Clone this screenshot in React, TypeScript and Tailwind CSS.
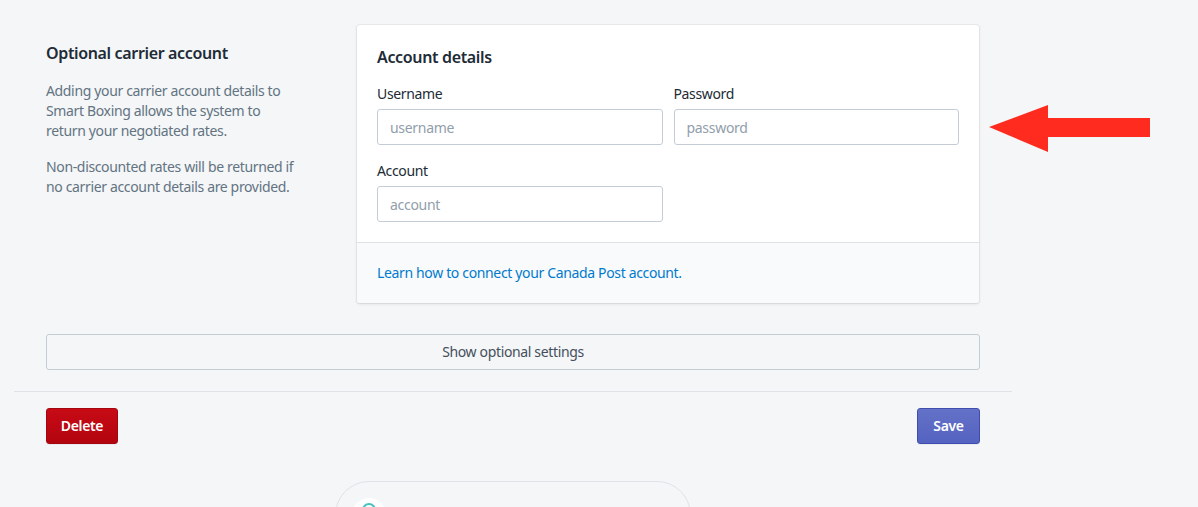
import React from 'react'

function Field({ label, placeholder }: { label: string; placeholder: string }) {
  return (
    <div className="flex-1 min-w-0">
      <label className="block text-[14px] leading-5 text-[#212b36] mb-[5px]">{label}</label>
      <input
        placeholder={placeholder}
        className="block w-full h-9 px-3 text-[14px] tracking-[-0.3px] bg-white border border-[#c4cdd5] rounded-[3px] outline-none placeholder:text-[#919eab]"
      />
    </div>
  )
}

export default function App() {
  return (
    <div className="relative min-h-screen bg-[#f4f6f8] text-[#212b36] text-[14px] leading-5 tracking-[-0.35px] font-['Segoe_UI','Noto_Sans',sans-serif] overflow-hidden">
      <div className="ml-[14px] w-[998px] pt-[25px]">
        {/* Annotated section */}
        <div className="flex px-8">
          <div className="w-[311px] pt-4 pr-[59px]">
            <h2 className="text-[16px] leading-6 font-semibold text-[#212b36]">Optional carrier account</h2>
            <p className="mt-4 text-[#637381]">
              Adding your carrier account details to Smart Boxing allows the system to return your negotiated rates.
            </p>
            <p className="mt-4 text-[#637381]">
              Non-discounted rates will be returned if no carrier account details are provided.
            </p>
          </div>

          <div className="w-[622px] bg-white rounded-[3px] shadow-[0_0_0_1px_rgba(63,63,68,0.05),0_1px_3px_0_rgba(63,63,68,0.15)] overflow-hidden">
            <div className="p-5">
              <h3 className="text-[16px] leading-6 font-semibold">Account details</h3>
              <div className="mt-[15px] flex gap-[11px]">
                <Field label="Username" placeholder="username" />
                <Field label="Password" placeholder="password" />
              </div>
              <div className="mt-4 flex gap-[11px]">
                <Field label="Account" placeholder="account" />
                <div className="flex-1" />
              </div>
            </div>
            <div className="border-t border-[#dfe3e8] bg-[#f9fafb] p-5">
              <a className="block text-[#007ace] cursor-pointer">
                Learn how to connect your Canada Post account.
              </a>
            </div>
          </div>
        </div>

        {/* Optional settings toggle */}
        <div className="px-8 mt-[31px]">
          <button className="w-full h-9 border border-[#c4cdd5] rounded-[3px] bg-[#f4f6f8] text-[#454f5b]">
            Show optional settings
          </button>
        </div>

        <div className="mt-[21px] border-t border-[#dfe3e8]" />

        {/* Actions */}
        <div className="px-8 pt-4 flex justify-between">
          <button className="h-9 w-[72px] rounded-[3px] border border-[#a30610] bg-gradient-to-b from-[#c70b15] to-[#b3050f] text-white font-semibold shadow-[0_1px_0_rgba(22,29,37,0.05)]">
            Delete
          </button>
          <button className="h-9 w-[63px] rounded-[3px] border border-[#3f4eae] bg-gradient-to-b from-[#6371c7] to-[#5563c1] text-white font-semibold shadow-[0_1px_0_rgba(22,29,37,0.05)]">
            Save
          </button>
        </div>

        {/* Footer help (cut off) */}
        <div className="mt-[37px] ml-[321px] w-[356px] h-[60px] rounded-t-[34px] border border-[#dfe3e8] pt-4 pl-4">
          <div className="w-[34px] h-[34px] rounded-full bg-white flex justify-center pt-[5px]">
            <div className="w-[14px] h-[14px] rounded-full border-2 border-[#47c1bf]" />
          </div>
        </div>
      </div>

      {/* Red annotation arrow */}
      <svg className="absolute left-[989px] top-[104px]" width="162" height="49" viewBox="0 0 162 49">
        <polygon points="0,23 59,1 59,14 161,14 161,33 59,33 59,48" fill="#ff2b1f" />
      </svg>
    </div>
  )
}
